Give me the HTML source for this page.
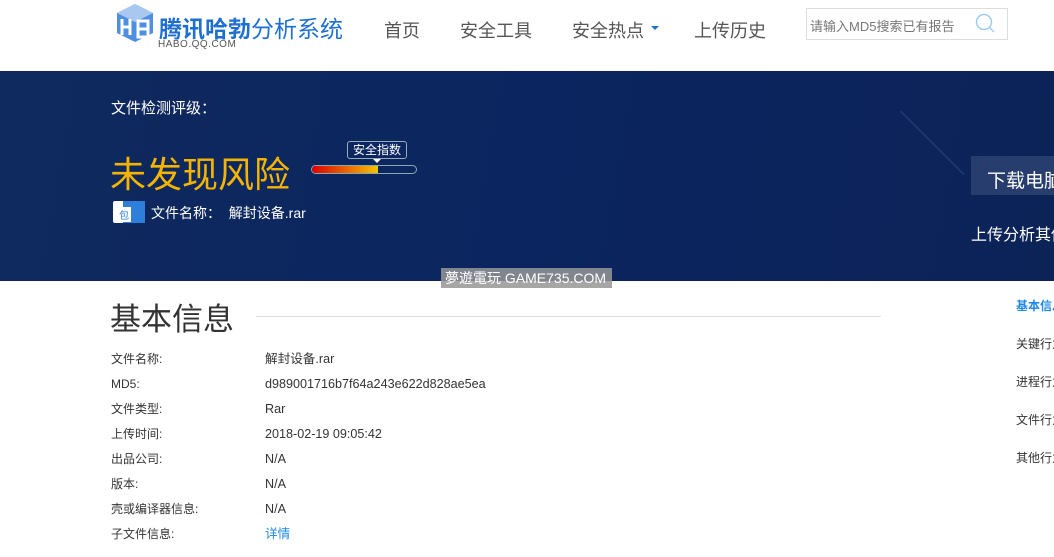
<!DOCTYPE html>
<html><head><meta charset="utf-8"><style>
*{margin:0;padding:0;box-sizing:border-box}
body{width:1054px;height:557px;overflow:hidden;background:#fff;font-family:"Liberation Sans","Noto Sans CJK SC",sans-serif;position:relative}
.a{position:absolute;white-space:nowrap}
.nav{font-size:18px;color:#555;top:17px}
.lbl,.val{font-size:12px;color:#333;line-height:16px;height:16px}
.lbl{left:111px}
.val{left:265px;font-size:12.6px}
.side{font-size:12px;color:#333;left:1016px}
</style></head><body>
<svg class="a" style="left:114px;top:3px" width="42" height="40" viewBox="0 0 42 40">
<path d="M21 1 L39 10 L39 30 L21 39 L3 30 L3 10Z" fill="#4f8ee0"/>
<path d="M21 1 L39 10 L21 19 L3 10Z" fill="#a9c8f0"/>
<path d="M8 16 L8 32 M8 24 L16 24 M16 16 L16 32" stroke="#fff" stroke-width="3" fill="none"/>
<path d="M24 18 L34 18 L34 34 L24 34Z M24 26 L34 26" stroke="#fff" stroke-width="3" fill="none"/>
</svg>
<div class="a" style="left:159px;top:10px;font-size:23px;color:#1e6fd0"><b style="font-weight:bold">腾讯哈勃</b>分析系统</div>
<div class="a" style="left:158px;top:39px;font-size:10px;color:#555;letter-spacing:0.5px">HABO.QQ.COM</div>
<div class="a nav" style="left:384px">首页</div>
<div class="a nav" style="left:460px">安全工具</div>
<div class="a nav" style="left:572px">安全热点</div>
<div class="a" style="left:651px;top:26px;width:0;height:0;border-left:4px solid transparent;border-right:4px solid transparent;border-top:4px solid #1e6fd0"></div>
<div class="a nav" style="left:694px">上传历史</div>
<div class="a" style="left:806px;top:8px;width:202px;height:32px;border:1px solid #ddd"></div>
<div class="a" style="left:810px;top:16px;font-size:13px;color:#777">请输入MD5搜索已有报告</div>
<svg class="a" style="left:974px;top:12px" width="22" height="22"><circle cx="10" cy="10" r="7.5" stroke="#9fcdf2" stroke-width="1.5" fill="none"/><path d="M15.5 15.5 L20 20" stroke="#9fcdf2" stroke-width="1.5"/></svg>

<div class="a" style="left:0;top:71px;width:1054px;height:210px;background:linear-gradient(100deg,#0f2a5e,#0b2560 50%,#0c2358);overflow:hidden">
<div class="a" style="left:900px;top:40px;width:1px;height:90px;background:#23467e;transform:rotate(-45deg);transform-origin:top"></div>
</div>
<div class="a" style="left:111px;top:97px;font-size:15px;color:#fff">文件检测评级：</div>
<div class="a" style="left:110px;top:146px;font-size:36px;color:#f5b400">未发现风险</div>
<div class="a" style="left:347px;top:141px;width:60px;height:18px;border:1px solid #9ab;border-radius:3px;font-size:12px;color:#fff;text-align:center;line-height:16px">安全指数</div>
<div class="a" style="left:373px;top:159px;border-left:4px solid transparent;border-right:4px solid transparent;border-top:4px solid #fff"></div>
<div class="a" style="left:311px;top:165px;width:106px;height:9px;border:1px solid #8aa;border-radius:5px;overflow:hidden"><div style="width:66px;height:100%;background:linear-gradient(90deg,#d00,#f5c400)"></div></div>
<div class="a" style="left:113px;top:201px;width:32px;height:22px;background:#fff;border-radius:2px"><div style="position:absolute;left:10px;top:0;width:22px;height:22px;background:#2e7fd9"></div><div style="position:absolute;left:4px;top:6px;font-size:10px;color:#2e7fd9;background:#fff;padding:0 2px">包</div></div>
<div class="a" style="left:151px;top:203px;font-size:14px;color:#fff">文件名称：&nbsp; 解封设备.rar</div>
<div class="a" style="left:971px;top:156px;width:90px;height:39px;background:#263d6e"></div>
<div class="a" style="left:987px;top:166px;font-size:19px;color:#fff">下载电脑</div>
<div class="a" style="left:971px;top:221px;font-size:16px;color:#fff">上传分析其他</div>
<div class="a" style="left:441px;top:268px;width:171px;height:20px;background:rgba(150,150,150,0.85);font-size:14px;color:#fff;line-height:20px;padding-left:4px">夢遊電玩 GAME735.COM</div>

<div class="a" style="left:110px;top:294px;font-size:31px;color:#333">基本信息</div>
<div class="a" style="left:256px;top:316px;width:625px;height:1px;background:#ddd"></div>
<div class="a lbl" style="top:351px">文件名称:</div><div class="a val" style="top:351px">解封设备.rar</div>
<div class="a lbl" style="top:376px">MD5:</div><div class="a val" style="top:376px">d989001716b7f64a243e622d828ae5ea</div>
<div class="a lbl" style="top:401px">文件类型:</div><div class="a val" style="top:401px">Rar</div>
<div class="a lbl" style="top:426px">上传时间:</div><div class="a val" style="top:426px">2018-02-19 09:05:42</div>
<div class="a lbl" style="top:451px">出品公司:</div><div class="a val" style="top:451px">N/A</div>
<div class="a lbl" style="top:476px">版本:</div><div class="a val" style="top:476px">N/A</div>
<div class="a lbl" style="top:501px">壳或编译器信息:</div><div class="a val" style="top:501px">N/A</div>
<div class="a lbl" style="top:526px">子文件信息:</div><div class="a val" style="top:526px;color:#1e88e5">详情</div>
<div class="a side" style="top:297px;color:#1e88e5;font-weight:bold">基本信息</div>
<div class="a side" style="top:335px">关键行为</div>
<div class="a side" style="top:373px">进程行为</div>
<div class="a side" style="top:411px">文件行为</div>
<div class="a side" style="top:449px">其他行为</div>
</body></html>
